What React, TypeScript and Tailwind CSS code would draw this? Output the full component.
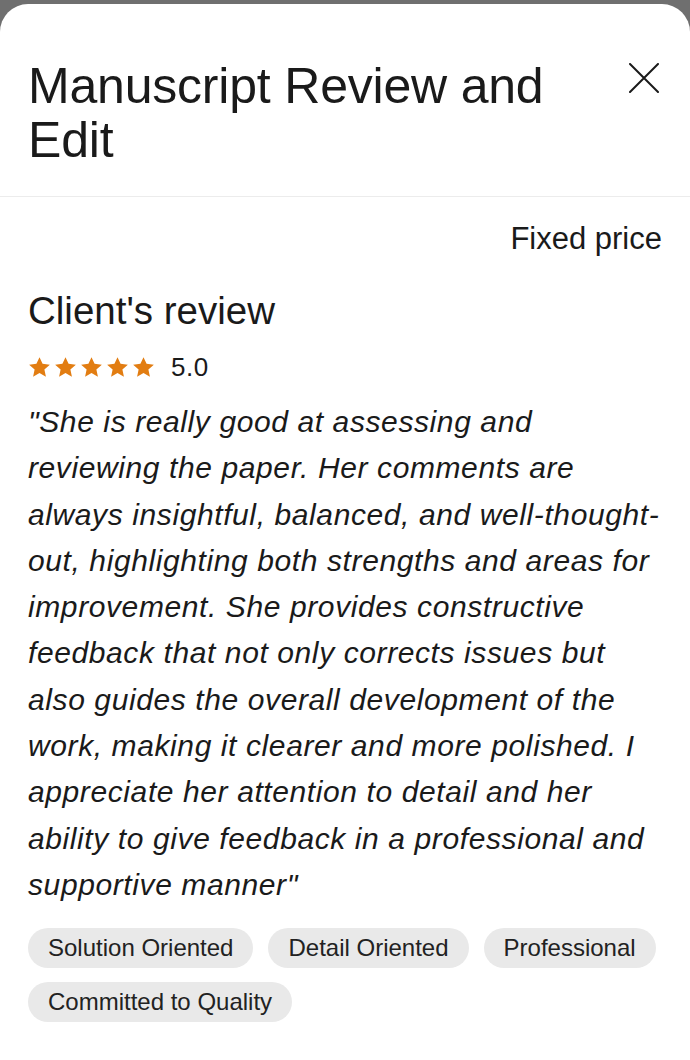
import React from 'react';

const tags = ['Solution Oriented', 'Detail Oriented', 'Professional', 'Committed to Quality'];

// line breaks kept as they appear in the app
const reviewLines = [
  '"She is really good at assessing and',
  'reviewing the paper. Her comments are',
  'always insightful, balanced, and well-thought-',
  'out, highlighting both strengths and areas for',
  'improvement. She provides constructive',
  'feedback that not only corrects issues but',
  'also guides the overall development of the',
  'work, making it clearer and more polished. I',
  'appreciate her attention to detail and her',
  'ability to give feedback in a professional and',
  'supportive manner"',
];

const Star: React.FC = () => (
  <svg width="23" height="23" viewBox="0 0 24 24" fill="#e27d12">
    <path d="M12 1.2l3.2 7 7.6.8-5.7 5.1 1.6 7.5L12 17.8l-6.7 3.8 1.6-7.5-5.7-5.1 7.6-.8z" />
  </svg>
);

export default function App() {
  return (
    <div className="min-h-[1060px] bg-[#6f6f6f] pt-[4px] font-['Liberation_Sans','Arial',sans-serif] text-[#1a1a1a]">
      <div className="min-h-[1056px] rounded-t-[28px] bg-white">
        {/* header */}
        <div className="flex items-start justify-between border-b border-[#ececec] px-[28px] pt-[55px] pb-[29px]">
          <h1 className="text-[50px] leading-[54px] font-normal tracking-[-0.2px]">
            Manuscript Review and
            <br />
            Edit
          </h1>
          <button className="mt-[4px] mr-[3px] shrink-0">
            <svg width="30" height="30" viewBox="0 0 30 30" stroke="#1a1a1a" strokeWidth="2" strokeLinecap="round">
              <path d="M1 1l28 28M29 1L1 29" />
            </svg>
          </button>
        </div>

        <div className="px-[28px]">
          <p className="pt-[24px] text-right text-[31px] leading-[36px]">Fixed price</p>

          <h2 className="mt-[32px] text-[38.5px] leading-[44px]">Client's review</h2>

          <div className="mt-[20px] flex h-[28px] items-center">
            <div className="flex gap-[3px]">
              {[0, 1, 2, 3, 4].map((i) => (
                <Star key={i} />
              ))}
            </div>
            <span className="ml-[16px] text-[26px] tracking-[0.5px]">5.0</span>
          </div>

          <p className="mt-[18px] text-[30px] leading-[46.3px] italic tracking-[0.6px]">
            {reviewLines.map((l) => (
              <span key={l} className="block whitespace-nowrap">
                {l}
              </span>
            ))}
          </p>

          <div className="mt-[20px] flex flex-wrap gap-x-[15px] gap-y-[14px]">
            {tags.map((t) => (
              <span
                key={t}
                className="flex h-[40px] items-center rounded-full bg-[#e9e9e9] px-[20px] text-[24px] text-[#222]"
              >
                {t}
              </span>
            ))}
          </div>
        </div>
      </div>
    </div>
  );
}
